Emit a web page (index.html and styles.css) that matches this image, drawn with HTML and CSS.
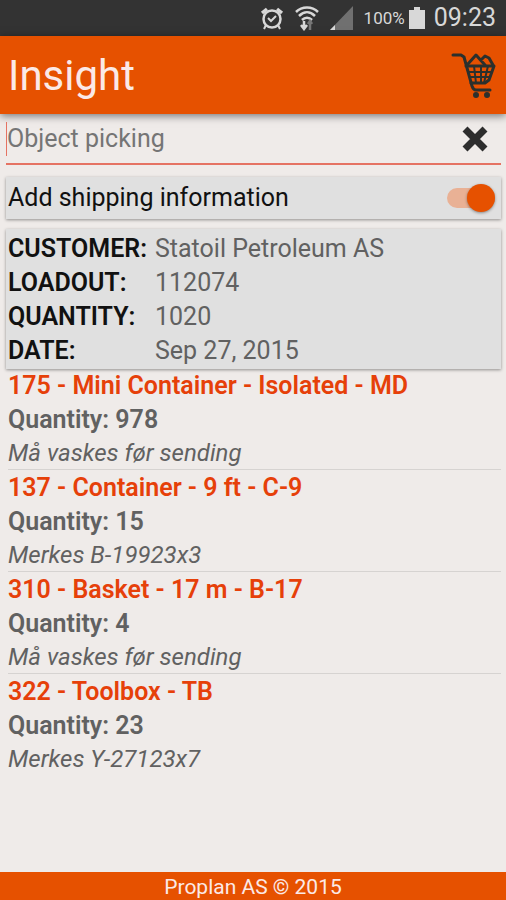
FILE: index.html
```
<!DOCTYPE html>
<html lang="en">
<head>
  <meta charset="UTF-8">
  <meta name="viewport" content="width=device-width, initial-scale=1.0">
  <title>Insight</title>
  <link rel="stylesheet" href="styles.css">
</head>
<body>
  <div class="status-bar">
    <svg class="alarm" width="24" height="24" viewBox="0 0 24 24" fill="none" stroke="#d8d8d8" stroke-width="2">
      <circle cx="12" cy="13" r="8.5" stroke-width="2.5"/>
      <path d="M8 12l3 3 5-5M6 19l-2 4M18 19l2 4"/>
      <path d="M2 7l5-4M22 7l-5-4" stroke-width="3.5"/>
    </svg>
    <svg class="wifi" width="24" height="26" viewBox="0 0 24 26" fill="none" stroke="#d8d8d8" stroke-width="2.5">
      <path d="M1 7c6-6 16-6 22 0M4 11c5-5 11-5 16 0M7 15c3-3 7-3 10 0"/>
      <path d="M9 16v7M6 20l3 4 3-4"/>
      <path d="M15 25v-8M13 19l2-3 2 3" stroke="#777"/>
    </svg>
    <svg class="signal" width="24" height="24" viewBox="0 0 24 24">
      <path d="M24 0v24H1z" fill="#707070"/>
      <path d="M6 19v5H1z" fill="#d8d8d8"/>
    </svg>
    <span class="percent">100%</span>
    <svg class="battery" width="16" height="22" viewBox="0 0 16 22" fill="#d8d8d8">
      <path d="M5 0h6v3h5v19H0V3h5z"/>
    </svg>
    <span class="clock">09:23</span>
  </div>

  <header class="app-bar">
    <h1>Insight</h1>
    <button type="button" class="icon-button cart" aria-label="Cart">
      <svg width="46" height="46" viewBox="0 0 46 46" fill="none" stroke="#2b302d" stroke-width="2" stroke-linejoin="round" stroke-linecap="round">
        <path d="M3 3h8l3 2 8 29c1 3 2 4 4 4h14" stroke-width="3"/>
        <path d="M16 14h28l-5 14-4 3H21" stroke-width="3"/>
        <path d="M17 13L26 3l9 10M31 8l4-4 4 2 4 7" stroke-width="3"/>
        <path d="M24 14l2 17M31 14v17M38 14l-4 17M18 20h24M20 25h20"/>
        <circle cx="26" cy="43" r="2" fill="#2b302d"/>
        <circle cx="37" cy="43" r="2" fill="#2b302d"/>
      </svg>
    </button>
  </header>

  <main>
    <form class="search">
      <input type="text" aria-label="Object picking" placeholder="Object picking">
      <button type="reset" class="icon-button" aria-label="Clear">
        <svg width="26" height="26" viewBox="0 0 26 26" stroke="#2d2d2d" stroke-width="7">
          <path d="M3 3l20 20M23 3L3 23"/>
        </svg>
      </button>
    </form>

    <div class="card shipping">
      <label for="shipping">Add shipping information</label>
      <input type="checkbox" id="shipping" class="switch" role="switch" checked>
    </div>

    <dl class="card details">
      <dt>CUSTOMER:</dt><dd>Statoil Petroleum AS</dd>
      <dt>LOADOUT:</dt><dd>112074</dd>
      <dt>QUANTITY:</dt><dd>1020</dd>
      <dt>DATE:</dt><dd>Sep 27, 2015</dd>
    </dl>

    <ul class="items">
      <li>
        <h2>175 - Mini Container - Isolated - MD</h2>
        <p class="quantity">Quantity: 978</p>
        <p class="note">Må vaskes før sending</p>
      </li>
      <li>
        <h2>137 - Container - 9 ft - C-9</h2>
        <p class="quantity">Quantity: 15</p>
        <p class="note">Merkes B-19923x3</p>
      </li>
      <li>
        <h2>310 - Basket - 17 m - B-17</h2>
        <p class="quantity">Quantity: 4</p>
        <p class="note">Må vaskes før sending</p>
      </li>
      <li>
        <h2>322 - Toolbox - TB</h2>
        <p class="quantity">Quantity: 23</p>
        <p class="note">Merkes Y-27123x7</p>
      </li>
    </ul>
  </main>

  <footer>Proplan AS © 2015</footer>
</body>
</html>
```
FILE: styles.css
```
* {
  box-sizing: border-box;
}
body {
  display: flex;
  flex-direction: column;
  min-height: 100vh;
  margin: 0;
  background: #efebe9;
  color: #616161;
  font: 25px/34px Roboto, sans-serif;
}
h1, h2, p, dl, dd, ul {
  margin: 0;
  padding: 0;
}
svg {
  display: block;
}

/* status bar */
.status-bar {
  display: flex;
  align-items: center;
  justify-content: flex-end;
  height: 36px;
  padding-right: 10px;
  background: #333;
  color: #d8d8d8;
}
.wifi {
  margin-left: 11px;
}
.signal {
  margin: 0 11px 0 10px;
}
.percent {
  font-size: 17px;
}
.battery {
  margin: 0 9px 0 4px;
}

/* app bar */
.app-bar {
  display: flex;
  align-items: center;
  justify-content: space-between;
  height: 78px;
  padding: 0 10px 0 8px;
  background: #e65100;
  box-shadow: 0 2px 8px rgba(0, 0, 0, 0.5);
}
h1 {
  padding-top: 2px;
  color: #fbe9e7;
  font-size: 42px;
  font-weight: 400;
  line-height: 50px;
}
.icon-button {
  padding: 0;
  border: none;
  background: none;
  cursor: pointer;
}

main {
  flex: 1;
  padding: 0 5px 0 6px;
}
.search {
  display: flex;
  align-items: center;
  height: 51px;
  margin-bottom: 12px;
  padding-right: 13px;
  border-bottom: 2px solid #e57363;
}
.search input {
  flex: 1;
  min-width: 0;
  height: 34px;
  padding: 0;
  border: none;
  border-left: 1px solid #e57363;
  outline: none;
  background: none;
  font: inherit;
}
.search input::placeholder {
  color: #757575;
  opacity: 1;
}

.card {
  background: #e0e0e0;
  box-shadow: 0 1px 3px rgba(0, 0, 0, 0.4);
}
.shipping {
  display: flex;
  align-items: center;
  justify-content: space-between;
  height: 42px;
  margin-bottom: 10px;
  padding: 0 6px 0 2px;
  color: #111;
}
.switch {
  display: flex;
  align-items: center;
  justify-content: flex-end;
  width: 48px;
  height: 20px;
  margin: 0;
  border-radius: 10px;
  background: #e9b195;
  appearance: none;
}
.switch::before {
  content: "";
  width: 28px;
  height: 28px;
  border-radius: 50%;
  background: #e65100;
  box-shadow: 0 1px 3px rgba(0, 0, 0, 0.4);
}
.switch:not(:checked) {
  justify-content: flex-start;
  background: #bbb;
}
.details {
  display: grid;
  grid-template-columns: 147px 1fr;
  padding: 3px 2px 1px;
}
dt {
  color: #111;
  font-weight: 600;
}

/* picking list */
.items {
  padding: 0 0 0 2px;
  list-style: none;
}
.items li {
  border-bottom: 1px solid #d6d3d1;
}
.items li + li {
  padding-top: 1px;
}
.items li:last-child {
  border-bottom: none;
}
h2 {
  color: #e64009;
  font-size: 25px;
  font-weight: 600;
}
.quantity {
  font-weight: 600;
}
.note {
  font-size: 24px;
  font-style: italic;
  line-height: 32px;
}

footer {
  padding-top: 2px;
  background: #e65100;
  color: #fbe9e7;
  font-size: 21px;
  line-height: 26px;
  text-align: center;
}
```
